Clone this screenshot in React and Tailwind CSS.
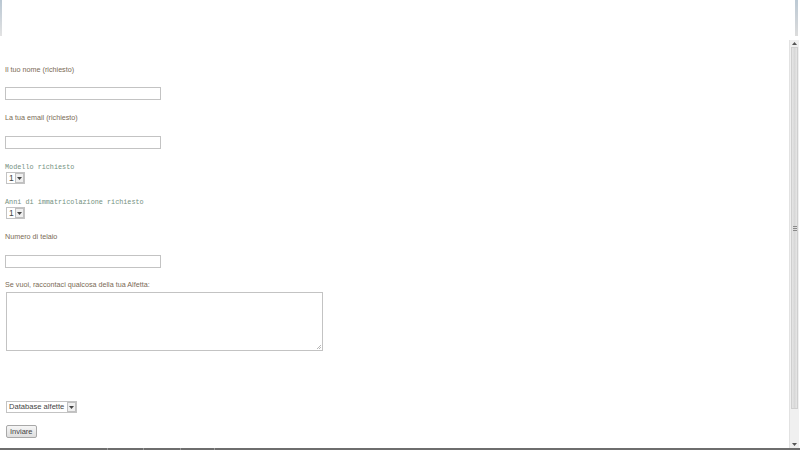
import React from 'react';

const label = 'block text-[7.2px] leading-[10px] text-[#7a6a55] font-["Liberation_Sans",Arial,sans-serif]';
const mono = 'block text-[6.8px] leading-[8px] text-[#74917f] font-["Liberation_Mono","Courier_New",monospace]';
const input = 'block w-[156px] h-[13px] border border-[#c3c3c3] bg-white';

const Arrow = () => (
  <span className="flex items-center justify-center w-[9px] h-[10px] border border-[#c0c0c0] bg-[#efefef]">
    <svg width="5" height="3" viewBox="0 0 5 3"><path d="M0 0h5L2.5 3z" fill="#444" /></svg>
  </span>
);

const Select = ({ value, width, text }) => (
  <div className={`flex items-center gap-[1px] h-[12px] border border-[#c3c3c3] bg-white pl-[2px] ${width}`}>
    <span className={`flex-1 whitespace-nowrap leading-[10px] text-[#444] font-['Liberation_Sans',Arial,sans-serif] ${text}`}>{value}</span>
    <Arrow />
  </div>
);

const Scrollbar = () => (
  <div className="flex flex-col w-[10px] h-full bg-[#f0f0f0] border-l border-[#e2e2e2]">
    <div className="flex items-center justify-center h-[7px]">
      <svg width="5" height="3" viewBox="0 0 5 3"><path d="M2.5 0L5 3H0z" fill="#555" /></svg>
    </div>
    <div className="flex items-center justify-center h-[362px] mx-[1px] bg-gradient-to-r from-[#e6e6e6] via-[#d8d8d8] to-[#e6e6e6] border border-[#cfcfcf]">
      <div className="flex flex-col gap-[1px]">
        <div className="w-[4px] h-[1px] bg-[#8a8a8a]" />
        <div className="w-[4px] h-[1px] bg-[#8a8a8a]" />
        <div className="w-[4px] h-[1px] bg-[#8a8a8a]" />
      </div>
    </div>
    <div className="flex-1" />
    <div className="flex items-center justify-center h-[8px]">
      <svg width="5" height="3" viewBox="0 0 5 3"><path d="M0 0h5L2.5 3z" fill="#555" /></svg>
    </div>
  </div>
);

export default function App() {
  return (
    <div className="flex flex-col w-[800px] h-[450px] overflow-hidden bg-white">
      <div className="flex justify-between h-[36px]">
        <div className="w-[2px] bg-gradient-to-b from-[#b9c7d3] to-[#e3e3e3]" />
        <div className="w-[3px] mr-[2px] bg-gradient-to-b from-[#bcc9d4] to-[#dcdcdc]" />
      </div>
      <div className="flex flex-1 min-h-0 pt-[4px]">
        <form className="flex-1 pl-[5px] pt-[25px]">
          <label className={label}>Il tuo nome (richiesto)</label>
          <input className={`${input} mt-[12px]`} />
          <label className={`${label} mt-[13px]`}>La tua email (richiesto)</label>
          <input className={`${input} mt-[13px]`} />
          <span className={`${mono} mt-[14px]`}>Modello richiesto</span>
          <div className="mt-[1px] ml-[1px]"><Select value="1" width="w-[19px]" text="text-[8.5px]" /></div>
          <span className={`${mono} mt-[14px]`}>Anni di immatricolazione richiesto</span>
          <div className="mt-[1px] ml-[1px]"><Select value="1" width="w-[19px]" text="text-[8.5px]" /></div>
          <label className={`${label} mt-[13px]`}>Numero di telaio</label>
          <input className={`${input} mt-[13px]`} />
          <label className={`${label} mt-[12px]`}>Se vuoi, raccontaci qualcosa della tua Alfetta:</label>
          <div className="relative w-[317px] h-[59px] ml-[1px] mt-[2px] border border-[#c3c3c3]">
            <svg className="absolute right-[1px] bottom-[1px]" width="5" height="5" viewBox="0 0 5 5">
              <path d="M1 5L5 1M3 5L5 3" stroke="#999" strokeWidth="0.7" />
            </svg>
          </div>
          <div className="mt-[50px] ml-[1px]"><Select value="Database alfette" width="w-[71px]" text="text-[7.6px]" /></div>
          <button type="button" className="block mt-[12px] ml-[1px] h-[13px] px-[3px] rounded-[2px] border border-[#a8a8a8] bg-gradient-to-b from-[#f6f6f6] to-[#dedede] text-[7.5px] leading-[10px] text-[#444] font-['Liberation_Sans',Arial,sans-serif]">
            Inviare
          </button>
        </form>
        <div className="h-full pr-[1px]"><Scrollbar /></div>
      </div>
      <div className="flex h-[2px] bg-[#6e6e6e]">
        <div className="w-[107px]" />
        <div className="w-[1px] bg-[#9a9a9a]" />
        <div className="w-[35px]" />
        <div className="w-[1px] bg-[#9a9a9a]" />
        <div className="w-[36px]" />
        <div className="w-[1px] bg-[#9a9a9a]" />
        <div className="w-[33px]" />
        <div className="w-[1px] bg-[#9a9a9a]" />
      </div>
    </div>
  );
}
